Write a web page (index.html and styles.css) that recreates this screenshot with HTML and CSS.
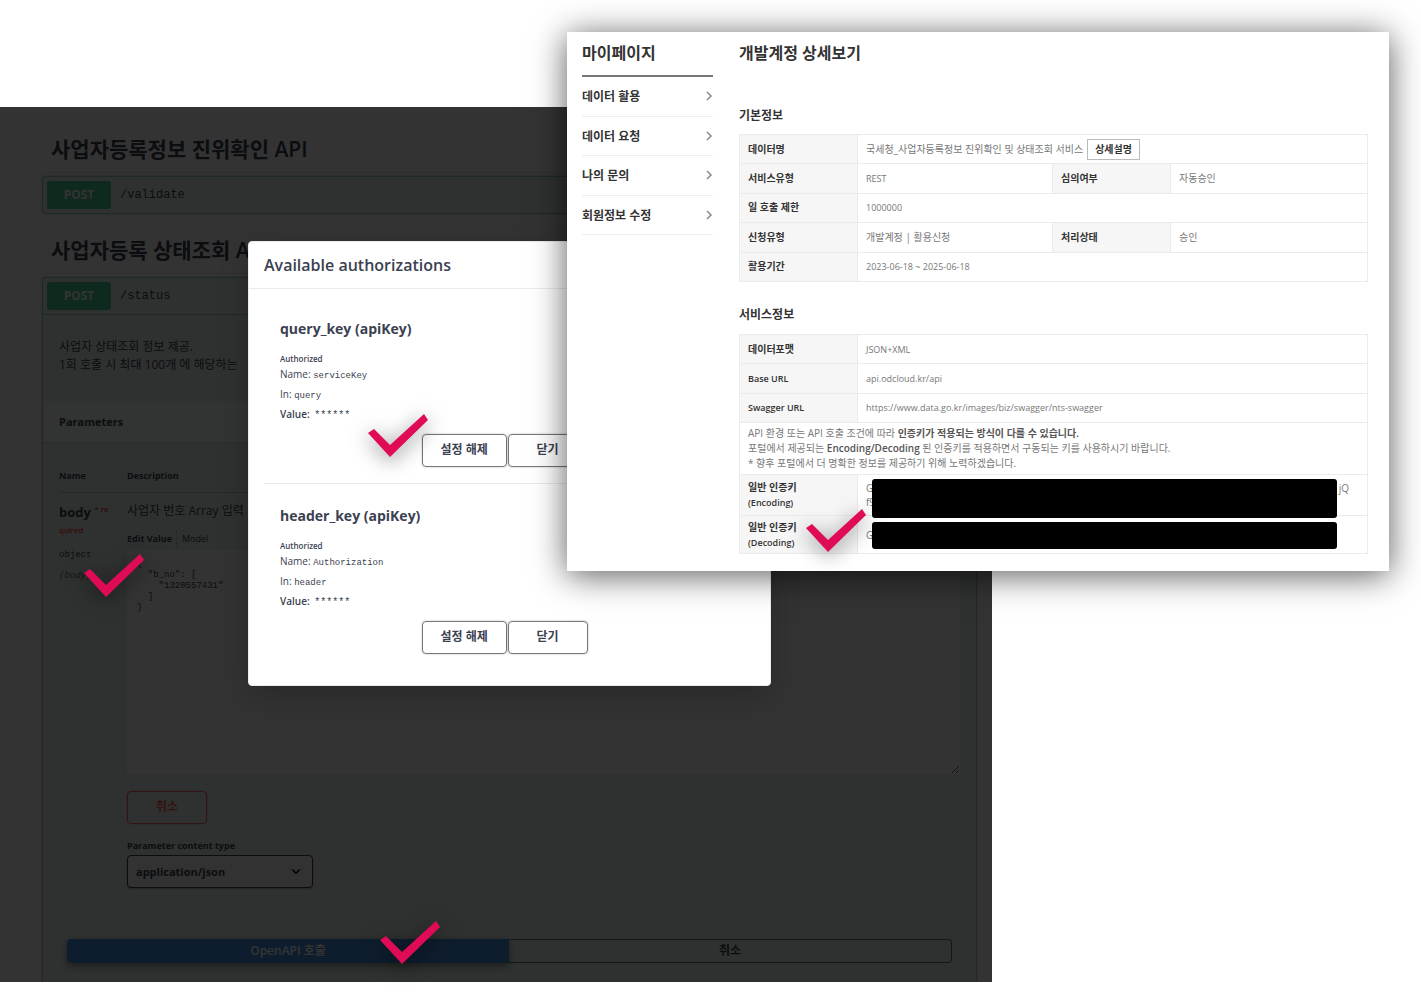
FILE: index.html
```html
<!DOCTYPE html>
<html lang="ko">
<head>
<meta charset="utf-8">
<meta name="viewport" content="width=device-width, initial-scale=1">
<title>사업자등록정보 API 인증 설정</title>
<link rel="stylesheet" href="styles.css">
</head>
<body>
<svg class="defs" aria-hidden="true">
  <symbol id="check" viewBox="0 0 60 44"><path d="M0 19 6 15 22 31 56 0 60 6 22 43Z"/></symbol>
  <symbol id="chevron" viewBox="0 0 8 12"><path d="M2 2 6 6 2 10" fill="none" stroke="#888" stroke-width="1.500"/></symbol>
</svg>
<div class="stage">
  <section class="swagger">
    <div class="api">
      <h2 class="api-title">사업자등록정보 진위확인 API</h2>
      <div class="op">
        <div class="op-head"><span class="method">POST</span><code class="path">/validate</code></div>
      </div>
      <h2 class="api-title">사업자등록 상태조회 API</h2>
      <div class="op op-open">
        <div class="op-head"><span class="method">POST</span><code class="path">/status</code></div>
        <p class="op-desc">사업자 상태조회 정보 제공.<br>1회 호출 시 최대 100개 에 해당하는</p>
        <h3 class="op-section">Parameters</h3>
        <div class="params">
          <div class="params-head"><span>Name</span><span>Description</span></div>
          <div class="param">
            <div class="param-name">
              <div class="name-line">body <span class="req">* re</span></div>
              <div class="req-rest">quired</div>
              <code class="type">object</code>
              <code class="in">(body)</code>
            </div>
            <div class="param-value">
              <label class="param-desc" for="body-value">사업자 번호 Array 입력</label>
              <div class="tabs"><b>Edit Value</b><span>Model</span></div>
              <textarea id="body-value" class="editor" spellcheck="false">{
  "b_no": [
    "1320557431"
  ]
}</textarea>
              <button class="btn btn-cancel" type="button">취소</button>
              <label class="type-label" for="ctype">Parameter content type</label>
              <div class="select-wrap">
                <select id="ctype" class="select"><option>application/json</option></select>
                <svg class="select-arrow" viewBox="0 0 8 6" aria-hidden="true"><path d="M1 1 4 4 7 1" fill="none" stroke="#000" stroke-width="1.200"/></svg>
              </div>
            </div>
          </div>
        </div>
        <div class="run">
          <button class="run-go" type="button">OpenAPI 호출</button>
          <button class="run-cancel" type="button">취소</button>
        </div>
      </div>
    </div>
    <div class="backdrop"></div>
    <div class="modal" role="dialog" aria-labelledby="auth-title">
      <h3 class="modal-title" id="auth-title">Available authorizations</h3>
      <div class="auth">
        <h4 class="auth-name">query_key (apiKey)</h4>
        <h6 class="auth-state">Authorized</h6>
        <p class="auth-row">Name: <code>serviceKey</code></p>
        <p class="auth-row">In: <code>query</code></p>
        <p class="auth-row auth-value">Value: <code>******</code></p>
        <div class="auth-actions"><button class="btn" type="button">설정 해제</button><button class="btn" type="button">닫기</button></div>
      </div>
      <div class="auth">
        <h4 class="auth-name">header_key (apiKey)</h4>
        <h6 class="auth-state">Authorized</h6>
        <p class="auth-row">Name: <code>Authorization</code></p>
        <p class="auth-row">In: <code>header</code></p>
        <p class="auth-row auth-value">Value: <code>******</code></p>
        <div class="auth-actions"><button class="btn" type="button">설정 해제</button><button class="btn" type="button">닫기</button></div>
      </div>
    </div>
  </section>

  <svg class="mark mark-body" aria-hidden="true"><use href="#check"/></svg>
  <svg class="mark mark-auth" aria-hidden="true"><use href="#check"/></svg>
  <svg class="mark mark-run" aria-hidden="true"><use href="#check"/></svg>

  <section class="account">
    <nav class="side">
      <h2 class="heading">마이페이지</h2>
      <div class="menu">
        <a href="#">데이터 활용<svg class="chev" aria-hidden="true"><use href="#chevron"/></svg></a>
        <a href="#">데이터 요청<svg class="chev" aria-hidden="true"><use href="#chevron"/></svg></a>
        <a href="#">나의 문의<svg class="chev" aria-hidden="true"><use href="#chevron"/></svg></a>
        <a href="#">회원정보 수정<svg class="chev" aria-hidden="true"><use href="#chevron"/></svg></a>
      </div>
    </nav>
    <div class="detail">
      <h2 class="heading">개발계정 상세보기</h2>
      <h3 class="subheading">기본정보</h3>
      <table class="info info-basic">
        <colgroup><col class="c-th"><col class="c-td"><col class="c-th"><col></colgroup>
        <tr><th scope="row">데이터명</th><td colspan="3"><div class="data-name">국세청_사업자등록정보 진위확인 및 상태조회 서비스<button class="mini" type="button">상세설명</button></div></td></tr>
        <tr><th scope="row">서비스유형</th><td class="latin">REST</td><th scope="row">심의여부</th><td>자동승인</td></tr>
        <tr><th scope="row">일 호출 제한</th><td class="latin" colspan="3">1000000</td></tr>
        <tr><th scope="row">신청유형</th><td>개발계정 | 활용신청</td><th scope="row">처리상태</th><td>승인</td></tr>
        <tr><th scope="row">활용기간</th><td class="latin" colspan="3">2023-06-18 ~ 2025-06-18</td></tr>
      </table>
      <h3 class="subheading">서비스정보</h3>
      <table class="info info-service">
        <colgroup><col class="c-th"><col></colgroup>
        <tr><th scope="row">데이터포맷</th><td class="latin">JSON+XML</td></tr>
        <tr><th class="latin" scope="row">Base URL</th><td class="latin">api.odcloud.kr/api</td></tr>
        <tr><th class="latin" scope="row">Swagger URL</th><td class="latin">https://www.data.go.kr/images/biz/swagger/nts-swagger</td></tr>
        <tr class="note"><td colspan="2">API 환경 또는 API 호출 조건에 따라 <b>인증키가 적용되는 방식이 다를 수 있습니다.</b><br>포털에서 제공되는 <b>Encoding/Decoding</b> 된 인증키를 적용하면서 구동되는 키를 사용하시기 바랍니다.<br>* 향후 포털에서 더 명확한 정보를 제공하기 위해 노력하겠습니다.</td></tr>
        <tr class="key key-enc"><th scope="row"><div>일반 인증키</div><div class="latin">(Encoding)</div></th><td><div class="key-line"><span>G</span><span>jQ</span></div><div class="key-line">f9</div><div class="redact"></div></td></tr>
        <tr class="key key-dec"><th scope="row"><div>일반 인증키</div><div class="latin">(Decoding)</div></th><td><div class="key-line">G</div><div class="redact"></div></td></tr>
      </table>
    </div>
    <svg class="mark mark-key" aria-hidden="true"><use href="#check"/></svg>
  </section>
</div>
</body>
</html>
```
FILE: styles.css
```css
* { box-sizing: border-box; }
body, h2, h3, h4, h6, p { margin: 0; }
body {
  background: #fff;
  font-family: "Open Sans", "Noto Sans CJK KR", sans-serif;
  font-size: 12px;
  color: #3b4151;
}
button, select, textarea { font-family: inherit; color: inherit; margin: 0; }
code { font-family: "Liberation Mono", "Noto Sans CJK KR", monospace; }
.defs { position: absolute; width: 0; height: 0; }
.stage { position: relative; min-height: 100vh; padding-top: 107px; }

/* API console */
.swagger { position: relative; margin-right: 429px; height: 875px; overflow: hidden; background: #fff; }
.api { padding: 18px 15px 0 42px; }
.api-title {
  height: 48px;
  margin-bottom: 3px;
  padding-left: 9px;
  border-bottom: 1px solid #e4e6ea;
  font-size: 21px;
  line-height: 49px;
  font-weight: 600;
}
.op {
  margin-bottom: 12px;
  border: 1px solid #8fd0c0;
  border-radius: 4px;
  background: #e9f6f0;
  box-shadow: 0 0 3px rgba(0, 0, 0, .2);
}
.op-head { display: flex; align-items: center; gap: 9px; padding: 4px; }
.method {
  width: 64px;
  border-radius: 3px;
  background: #49cc90;
  color: #fff;
  font-size: 12px;
  line-height: 28px;
  font-weight: 700;
  text-align: center;
}
.path { font-size: 12px; }
.op-open { margin-bottom: 0; height: 740px; }
.op-open .op-head { border-bottom: 1px solid #8fd0c0; }
.op-desc { padding: 23px 16px 27px; font-size: 12px; line-height: 18px; }
.op-section {
  padding: 0 16px;
  background: #fbfdfc;
  box-shadow: 0 1px 2px rgba(0, 0, 0, .1);
  font-size: 11px;
  line-height: 41px;
}
.params { padding: 25px 16px 0; }
.params-head {
  display: grid;
  grid-template-columns: 68px 1fr;
  padding-bottom: 8px;
  border-bottom: 1px solid #c4cbce;
  font-size: 9px;
  line-height: 17px;
  font-weight: 700;
}
.param { display: grid; grid-template-columns: 68px 1fr; padding-top: 8px; }
.param-name { display: flex; flex-direction: column; }
.name-line { font-size: 13px; line-height: 22px; font-weight: 700; }
.req { color: #f00; font-size: 8px; line-height: 16px; font-weight: 400; vertical-align: top; }
.req-rest { color: #f00; font-size: 8px; line-height: 14px; }
.type { margin-top: 9px; font-size: 9px; line-height: 18px; }
.in { margin-top: 3px; font-size: 9px; line-height: 18px; font-style: italic; color: #666; }
.param-value { display: flex; flex-direction: column; align-items: flex-start; }
.param-desc { line-height: 20px; }
.tabs { display: flex; gap: 4px; margin-top: 9px; font-size: 9px; line-height: 18px; }
.tabs span { padding-left: 5px; border-left: 1px solid #ccc; }
.editor {
  width: 100%;
  height: 224px;
  margin-top: 2px;
  padding: 9px 10px;
  border: 0;
  border-radius: 0;
  background: #fff;
  font: 9px/11px "Liberation Mono", monospace;
  resize: both;
}
.btn {
  height: 33px;
  min-width: 80px;
  padding: 0 18px 2px;
  border: 1px solid #777;
  border-radius: 4px;
  background: transparent;
  box-shadow: 0 0 2px rgba(0, 0, 0, .3);
  font-size: 12px;
  line-height: 20px;
  font-weight: 600;
  white-space: nowrap;
}
.btn-cancel { margin-top: 17px; border-color: #ff6060; color: #ff6060; }
.type-label { margin-top: 13px; font-size: 9px; line-height: 18px; font-weight: 700; }
.select-wrap { position: relative; width: 186px; }
.select {
  display: block;
  width: 100%;
  height: 33px;
  padding: 0 8px;
  border: 1px solid #41444e;
  border-radius: 4px;
  appearance: none;
  background: #f7f7f7;
  box-shadow: 0 1px 2px rgba(0, 0, 0, .3);
  font-size: 11px;
  font-weight: 700;
}
.select-arrow { position: absolute; right: 12px; top: 13px; width: 10px; height: 8px; }
.run { display: flex; margin: 51px 24px 0; }
.run button { flex: 1; height: 24px; padding: 0; font-size: 12px; line-height: 20px; font-weight: 600; }
.run-go { border: 0; border-radius: 4px 0 0 4px; background: #4990e2; color: #fff; box-shadow: 0 3px 8px rgba(0, 0, 0, .4); }
.run-cancel { border: 1px solid #6b7078; border-left: 0; border-radius: 0 4px 4px 0; background: transparent; }
.backdrop { position: absolute; inset: 0; background: rgba(0, 0, 0, .8); }

/* authorization dialog */
.modal {
  position: absolute;
  left: 248px;
  right: 221px;
  top: 134px;
  height: 445px;
  border: 1px solid #ebebeb;
  border-radius: 4px;
  background: #fff;
  box-shadow: 0 10px 30px rgba(0, 0, 0, .2);
}
.modal-title { padding: 0 15px; border-bottom: 1px solid #ebebeb; font-size: 16px; line-height: 46px; font-weight: 600; }
.auth { margin: 0 15px; padding: 28px 16px 16px; border-bottom: 1px solid #ebebeb; }
.auth:last-child { border-bottom: 0; }
.auth + .auth { padding-top: 20px; }
.auth-name { font-size: 14px; line-height: 24px; font-weight: 700; }
.auth-state { margin-top: 11px; font-size: 8px; line-height: 14px; font-weight: 600; }
.auth-row { margin-bottom: 4px; font-size: 10px; line-height: 16px; }
.auth-row code { font-size: 9px; line-height: 10px; }
.auth-value { font-weight: 600; }
.auth-value code { margin-left: 2px; font-size: 10px; font-weight: 400; }
.auth-actions { display: flex; justify-content: center; gap: 1px; margin: 12px 10px 0 0; }
.auth-actions .btn:first-child { width: 85px; }

/* account window */
.account {
  position: absolute;
  left: 567px;
  right: 32px;
  top: 32px;
  min-height: 539px;
  display: flex;
  gap: 26px;
  padding: 8px 21px 17px 15px;
  background: #fff;
  box-shadow: 0 4px 32px rgba(0, 0, 0, .65);
  color: #333;
}
.side { width: 131px; }
.detail { flex: 1; }
.heading { font-size: 16px; line-height: 27px; font-weight: 600; }
.side .heading { padding-bottom: 8px; border-bottom: 2px solid #777; }
.menu { display: flex; flex-direction: column; height: 158px; }
.menu a {
  flex: 1;
  display: flex;
  align-items: center;
  justify-content: space-between;
  border-bottom: 1px solid #eee;
  color: #333;
  font-size: 12px;
  font-weight: 600;
  text-decoration: none;
}
.chev { width: 8px; height: 12px; }
.subheading { margin: 39px 0 8px; font-size: 12px; line-height: 20px; font-weight: 600; }
.info { width: 100%; border-collapse: collapse; table-layout: fixed; font-size: 10px; line-height: 15px; }
.info-basic { height: 148px; }
.info-basic tr { height: 29px; }
.info-service { height: 220px; }
.info + .subheading { margin-top: 23px; margin-bottom: 9px; }
.c-th { width: 118px; }
.c-td { width: 195px; }
.info th, .info td { padding: 0 8px; border: 1px solid #ebebeb; text-align: left; }
.info th { background: #f6f6f6; font-weight: 600; }
.info td { color: #777; }
.info .latin { font-size: 9px; }
.data-name { display: flex; align-items: center; gap: 4px; }
.mini { height: 21px; padding: 0 7px; border: 1px solid #bbb; background: #fff; color: #333; font-size: 10px; line-height: 15px; font-weight: 600; }
.note { height: 52px; }
.note b { color: #555; font-weight: 600; }
.key-enc { height: 41px; }
.key-dec { height: 38px; }
.key td { position: relative; }
.key-line { display: flex; justify-content: space-between; padding-right: 10px; line-height: 14px; }
.redact { position: absolute; left: 14px; right: 30px; top: 4px; bottom: -3px; border-radius: 3px; background: #000; }
.key-dec .redact { top: 6px; bottom: 4px; }

/* check marks laid over the screens */
.mark { position: absolute; width: 60px; height: 44px; overflow: visible; fill: #e00b56; filter: drop-shadow(0 4px 10px rgba(0, 0, 0, .5)); }
.mark-body { left: 84px; top: 554px; }
.mark-auth { left: 368px; top: 414px; }
.mark-run { left: 380px; top: 921px; }
.mark-key { left: 239px; top: 477px; }
```
